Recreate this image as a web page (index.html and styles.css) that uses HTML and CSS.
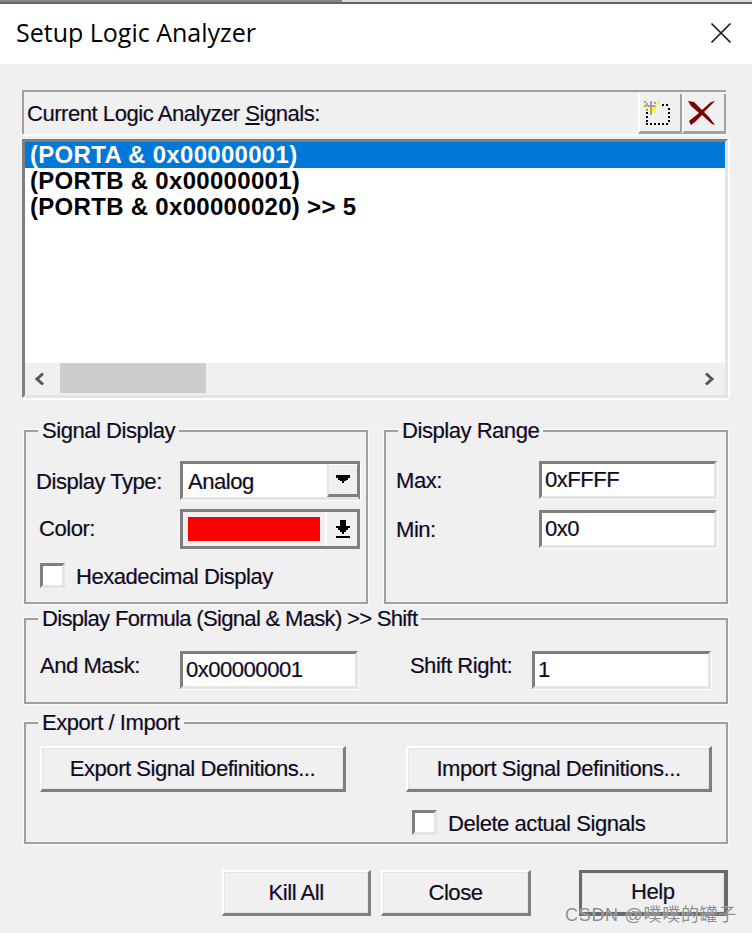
FILE: index.html
```html
<!DOCTYPE html>
<html lang="en">
<head>
<meta charset="utf-8">
<title>Setup Logic Analyzer</title>
<link rel="stylesheet" href="styles.css">
</head>
<body>
<div class="window">
  <div class="topline"></div>
  <header class="titlebar">
    <h1 class="title">Setup Logic Analyzer</h1>
    <svg class="close-x" width="22" height="22" viewBox="0 0 22 22"><path d="M1.5 1.5 20.5 20.5M20.5 1.5 1.5 20.5" stroke="#1a1a1a" stroke-width="1.7" fill="none"/></svg>
  </header>
  <main class="content">
    <div class="signals-head">
      <span class="signals-label">Current Logic Analyzer <u>S</u>ignals:</span>
      <div class="tool">
        <svg width="26" height="24" viewBox="0 0 26 24" shape-rendering="crispEdges">
          <path d="M2 11h2v2H2zM2 15h2v2H2zM2 19h2v2H2zM2 22h2v2H2zM6 22h2v2H6zM10 22h2v2h-2zM14 22h2v2h-2zM18 22h2v2h-2zM22 22h2v2h-2zM24 19h2v2h-2zM24 15h2v2h-2zM24 11h2v2h-2zM24 7h2v2h-2zM22 3h2v2h-2zM18 3h2v2h-2z" fill="#000"/>
          <path d="M0 0h2v2H0zM2 2h2v2H2zM0 4h12v2H0zM6 0h2v14H6zM10 1h2v2h-2zM2 8h2v2H2z" fill="#a0a0a0"/>
          <path d="M2 5h2v3H2zM8 6h4v4H8zM13 0h3v3h-3zM10 10h2v2h-2zM11 3h2v2h-2z" fill="#ff0"/>
        </svg>
      </div>
      <div class="tool">
        <svg width="27" height="24" viewBox="0 0 27 24"><path d="M0 0 6 1 14 9 23 1 27 0 24 3 16 11 21 16 24 20 27 24 24 23 14 14 7 21 3 24 1 20 11 12 3 5Z" fill="#800000"/></svg>
      </div>
    </div>
    <div class="listbox">
      <ul class="list">
        <li class="list-item selected">(PORTA &amp; 0x00000001)</li>
        <li class="list-item">(PORTB &amp; 0x00000001)</li>
        <li class="list-item">(PORTB &amp; 0x00000020) &gt;&gt; 5</li>
      </ul>
      <div class="hscroll">
        <svg class="sb-arrow" width="14" height="14" viewBox="0 0 14 14"><path d="M10 1.5 4 7l6 5.5" stroke="#555" stroke-width="3" fill="none"/></svg>
        <div class="sb-track"><div class="sb-thumb"></div></div>
        <svg class="sb-arrow" width="14" height="14" viewBox="0 0 14 14"><path d="M4 1.5 10 7l-6 5.5" stroke="#555" stroke-width="3" fill="none"/></svg>
      </div>
    </div>

    <div class="two-col">
      <fieldset class="group">
        <legend class="legend">Signal Display</legend>
        <div class="row row-type">
          <span class="lbl lbl-low">Display Type:</span>
          <div class="combo">
            <span class="combo-value">Analog</span>
            <span class="combo-btn"><svg width="14" height="8" viewBox="0 0 14 8" shape-rendering="crispEdges"><path d="M0 0h14v3h-2v2h-2v1H8v2H6V6H4V5H2V3H0z" fill="#000"/></svg></span>
          </div>
        </div>
        <div class="row row-color">
          <span class="lbl lbl-color">Color:</span>
          <div class="colorbox">
            <span class="swatch-wrap"><span class="swatch"></span></span>
            <span class="color-btn"><svg width="14" height="18" viewBox="0 0 14 18" shape-rendering="crispEdges"><path d="M4 0h6v6h4v2h-2v2h-2v2H8v2H6v-2H4v-2H2V8H0V6h4z" fill="#000"/><path d="M0 16h14v2H0z" fill="#000"/></svg></span>
          </div>
        </div>
        <label class="check check-hex"><span class="box"></span><span class="check-text">Hexadecimal Display</span></label>
      </fieldset>
      <fieldset class="group">
        <legend class="legend">Display Range</legend>
        <div class="row row-max">
          <span class="lbl lbl-low">Max:</span>
          <div class="edit edit-range">0xFFFF</div>
        </div>
        <div class="row row-min">
          <span class="lbl lbl-low">Min:</span>
          <div class="edit edit-range">0x0</div>
        </div>
      </fieldset>
    </div>

    <fieldset class="group group-formula">
      <legend class="legend legend-formula">Display Formula (Signal &amp; Mask) &gt;&gt; Shift</legend>
      <div class="row row-formula">
        <span class="lbl lbl-high">And Mask:</span>
        <div class="edit edit-mask">0x00000001</div>
        <span class="lbl lbl-high lbl-shift">Shift Right:</span>
        <div class="edit edit-shift">1</div>
      </div>
    </fieldset>

    <fieldset class="group group-export">
      <legend class="legend">Export / Import</legend>
      <div class="row row-export">
        <button class="btn btn-wide" type="button">Export Signal Definitions...</button>
        <button class="btn btn-wide" type="button">Import Signal Definitions...</button>
      </div>
      <label class="check check-del"><span class="box"></span><span class="check-text">Delete actual Signals</span></label>
    </fieldset>

    <div class="actions">
      <button class="btn btn-act" type="button">Kill All</button>
      <button class="btn btn-act" type="button">Close</button>
      <button class="btn btn-act btn-default" type="button"><span class="help-text">Help</span></button>
    </div>
    <div class="watermark">CSDN @噗噗的罐子</div>
  </main>
</div>
</body>
</html>
```
FILE: styles.css
```css
* { box-sizing: border-box; }
html, body { margin: 0; padding: 0; }
body {
  width: 752px;
  height: 933px;
  overflow: hidden;
  background: #f0f0f0;
  font-family: "Liberation Sans", Arial, sans-serif;
  font-size: 22px;
  letter-spacing: -.45px;
  color: #0b0b1e;
  text-shadow: -.5px 0 rgba(255,160,60,.4), .5px 0 rgba(60,110,255,.4);
}
.window { width: 752px; height: 933px; display: flex; flex-direction: column; }
.topline {
  height: 4px;
  flex: none;
  background: linear-gradient(90deg, #868686 342px, #dcdcdc 342px) top / 100% 2px no-repeat, #666;
}
.titlebar {
  height: 60px;
  background: #fff;
  display: flex;
  align-items: center;
  justify-content: space-between;
  padding: 0 20px 3px 16px;
  flex: none;
}
.title { margin: 0; font: 400 25px/1 "Open Sans", sans-serif; letter-spacing: 0; color: #000; text-shadow: none; }
.content { position: relative; flex: 1; padding: 26px 24px 0 22px; }

.signals-head {
  height: 44px;
  display: flex;
  align-items: stretch;
  border-top: 2px solid #a0a0a0;
  border-left: 2px solid #a0a0a0;
  box-shadow: 0 2px 0 #fff;
  width: 704px;
}
.signals-label { flex: 1; padding: 9px 0 0 3px; line-height: 26px; white-space: nowrap; }
.tool {
  width: 44px;
  height: 40px;
  margin-top: 2px;
  padding-left: 4px;
  background: #f0f0f0;
  border-left: 2px solid #fff;
  border-bottom: 3px solid #a0a0a0;
  border-right: 2px solid #a0a0a0;
  display: flex;
  align-items: center;
}
.listbox {
  margin-top: 5px;
  width: 706px;
  height: 259px;
  display: flex;
  flex-direction: column;
  border-top: 3px solid #7f7f7f;
  border-left: 3px solid #7f7f7f;
  border-right: 3px solid #e4e4e4;
  border-bottom: 3px solid #e4e4e4;
  box-shadow: 0 2px 0 #fff, 2px 0 0 #fff;
}
.list {
  list-style: none;
  margin: 0;
  padding: 0;
  height: 221px;
  background: #fff;
  flex: none;
}
.list-item {
  height: 26px;
  padding-left: 5px;
  font-weight: 700;
  font-size: 24px;
  letter-spacing: .3px;
  line-height: 26px;
  color: #000;
  text-shadow: none;
}
.selected { background: #0078d7; color: #fff; }
.hscroll { flex: 1; display: flex; align-items: center; background: #f0f0f0; padding: 0 9px 0 8px; }
.sb-track { flex: 1; height: 30px; padding-left: 13px; align-self: flex-start; }
.sb-thumb { width: 146px; height: 30px; background: #cdcdcd; }

.two-col { display: flex; gap: 16px; margin: 20px 0 0 2px; }
.group {
  margin: 0;
  min-width: 0;
  border: 2px solid #a0a0a0;
  padding: 0 10px;
  width: 344px;
  height: 186px;
  box-shadow: 0 0 0 1px #fafafa;
}
.legend { margin-left: 2px; padding: 0 4px; line-height: 26px; white-space: nowrap; }
.legend-formula { letter-spacing: -.67px; }
.row { display: flex; align-items: center; }
.lbl { white-space: nowrap; }
.lbl-low { padding-top: 3px; }
.lbl-high { padding-bottom: 8px; }

.row-type { margin-top: 16px; height: 40px; justify-content: space-between; }
.combo {
  width: 180px;
  height: 39px;
  margin-right: -4px;
  display: flex;
  background: #fff;
  border: 3px solid #7f7f7f;
  border-right-width: 2px;
  border-bottom-color: #e4e4e4;
  box-shadow: 1px 1px 0 #fff;
  padding-left: 5px;
  align-items: center;
}
.combo-value { flex: 1; padding-top: 3px; }
.combo-btn {
  width: 31px;
  height: 33px;
  align-self: flex-start;
  background: #f0f0f0;
  border-left: 2px solid #e4e4e4;
  border-top: 1px solid #fff;
  border-right: 1px solid #7f7f7f;
  border-bottom: 3px solid #7f7f7f;
  display: flex;
  align-items: center;
  justify-content: center;
}
.row-color { margin-top: 9px; height: 40px; justify-content: space-between; }
.lbl-color { padding-left: 3px; }
.colorbox {
  width: 180px;
  height: 40px;
  margin-right: -4px;
  display: flex;
  border: 3px solid #7f7f7f;
  background: #f0f0f0;
}
.swatch-wrap { flex: 1; padding: 5px 5px; border-right: 2px solid #fff; }
.swatch { display: block; width: 132px; height: 24px; background: #f00; }
.color-btn { width: 31px; padding-left: 2px; display: flex; align-items: center; justify-content: center; }

.check { display: flex; align-items: center; }
.box {
  width: 25px;
  height: 25px;
  flex: none;
  background: #fff;
  border: 3px solid #7f7f7f;
  border-right-color: #e4e4e4;
  border-bottom-color: #e4e4e4;
}
.check-text { padding-top: 3px; }
.check-hex { margin: 12px 0 0 4px; gap: 11px; }

.row-max { margin-top: 16px; height: 39px; justify-content: space-between; }
.row-min { margin-top: 10px; height: 39px; justify-content: space-between; }
.edit {
  height: 38px;
  background: #fff;
  border: 3px solid #7f7f7f;
  border-right-color: #e4e4e4;
  border-bottom-color: #e4e4e4;
  padding-left: 3px;
  line-height: 32px;
  box-shadow: 1px 1px 0 #fff;
}
.edit-range { width: 178px; margin-right: -1px; }

.group-formula { width: 704px; height: 98px; margin: 2px 0 0 2px; }
.row-formula { margin-top: 18px; height: 39px; padding-left: 4px; }
.edit-mask { width: 178px; margin-left: 40px; }
.lbl-shift { margin-left: 52px; }
.edit-shift { width: 179px; margin-left: 20px; }

.group-export { width: 704px; height: 134px; margin: 6px 0 0 2px; }
.row-export { margin-top: 10px; padding-left: 4px; gap: 60px; }
.btn {
  font: inherit;
  letter-spacing: inherit;
  color: inherit;
  text-shadow: inherit;
  padding: 0;
  background: #f0f0f0;
  border: 2px solid #fff;
  border-right: 3px solid #7f7f7f;
  border-bottom: 3px solid #7f7f7f;
  box-shadow: inset -1px -1px 0 #e4e4e4, inset 1px 1px 0 #e4e4e4;
}
.btn-wide { width: 306px; height: 46px; }
.check-del { margin: 16px 0 0 376px; gap: 11px; }

.actions { display: flex; margin: 26px 0 0 200px; }
.btn-act { width: 150px; height: 46px; margin-right: 10px; }
.btn-act:nth-child(2) { margin-right: 48px; }
.btn-default { border: 3px solid #6a6a6a; border-bottom-width: 4px; border-right-width: 4px; margin: 0; }
.help-text { position: relative; top: -1px; }

.watermark {
  position: absolute;
  right: 15px;
  bottom: 7px;
  font: 18px/22px "Liberation Sans", "Noto Sans CJK SC", sans-serif;
  color: rgba(120,120,120,.85);
  text-shadow: 0 0 1px #fff;
  letter-spacing: .7px;
}
```
